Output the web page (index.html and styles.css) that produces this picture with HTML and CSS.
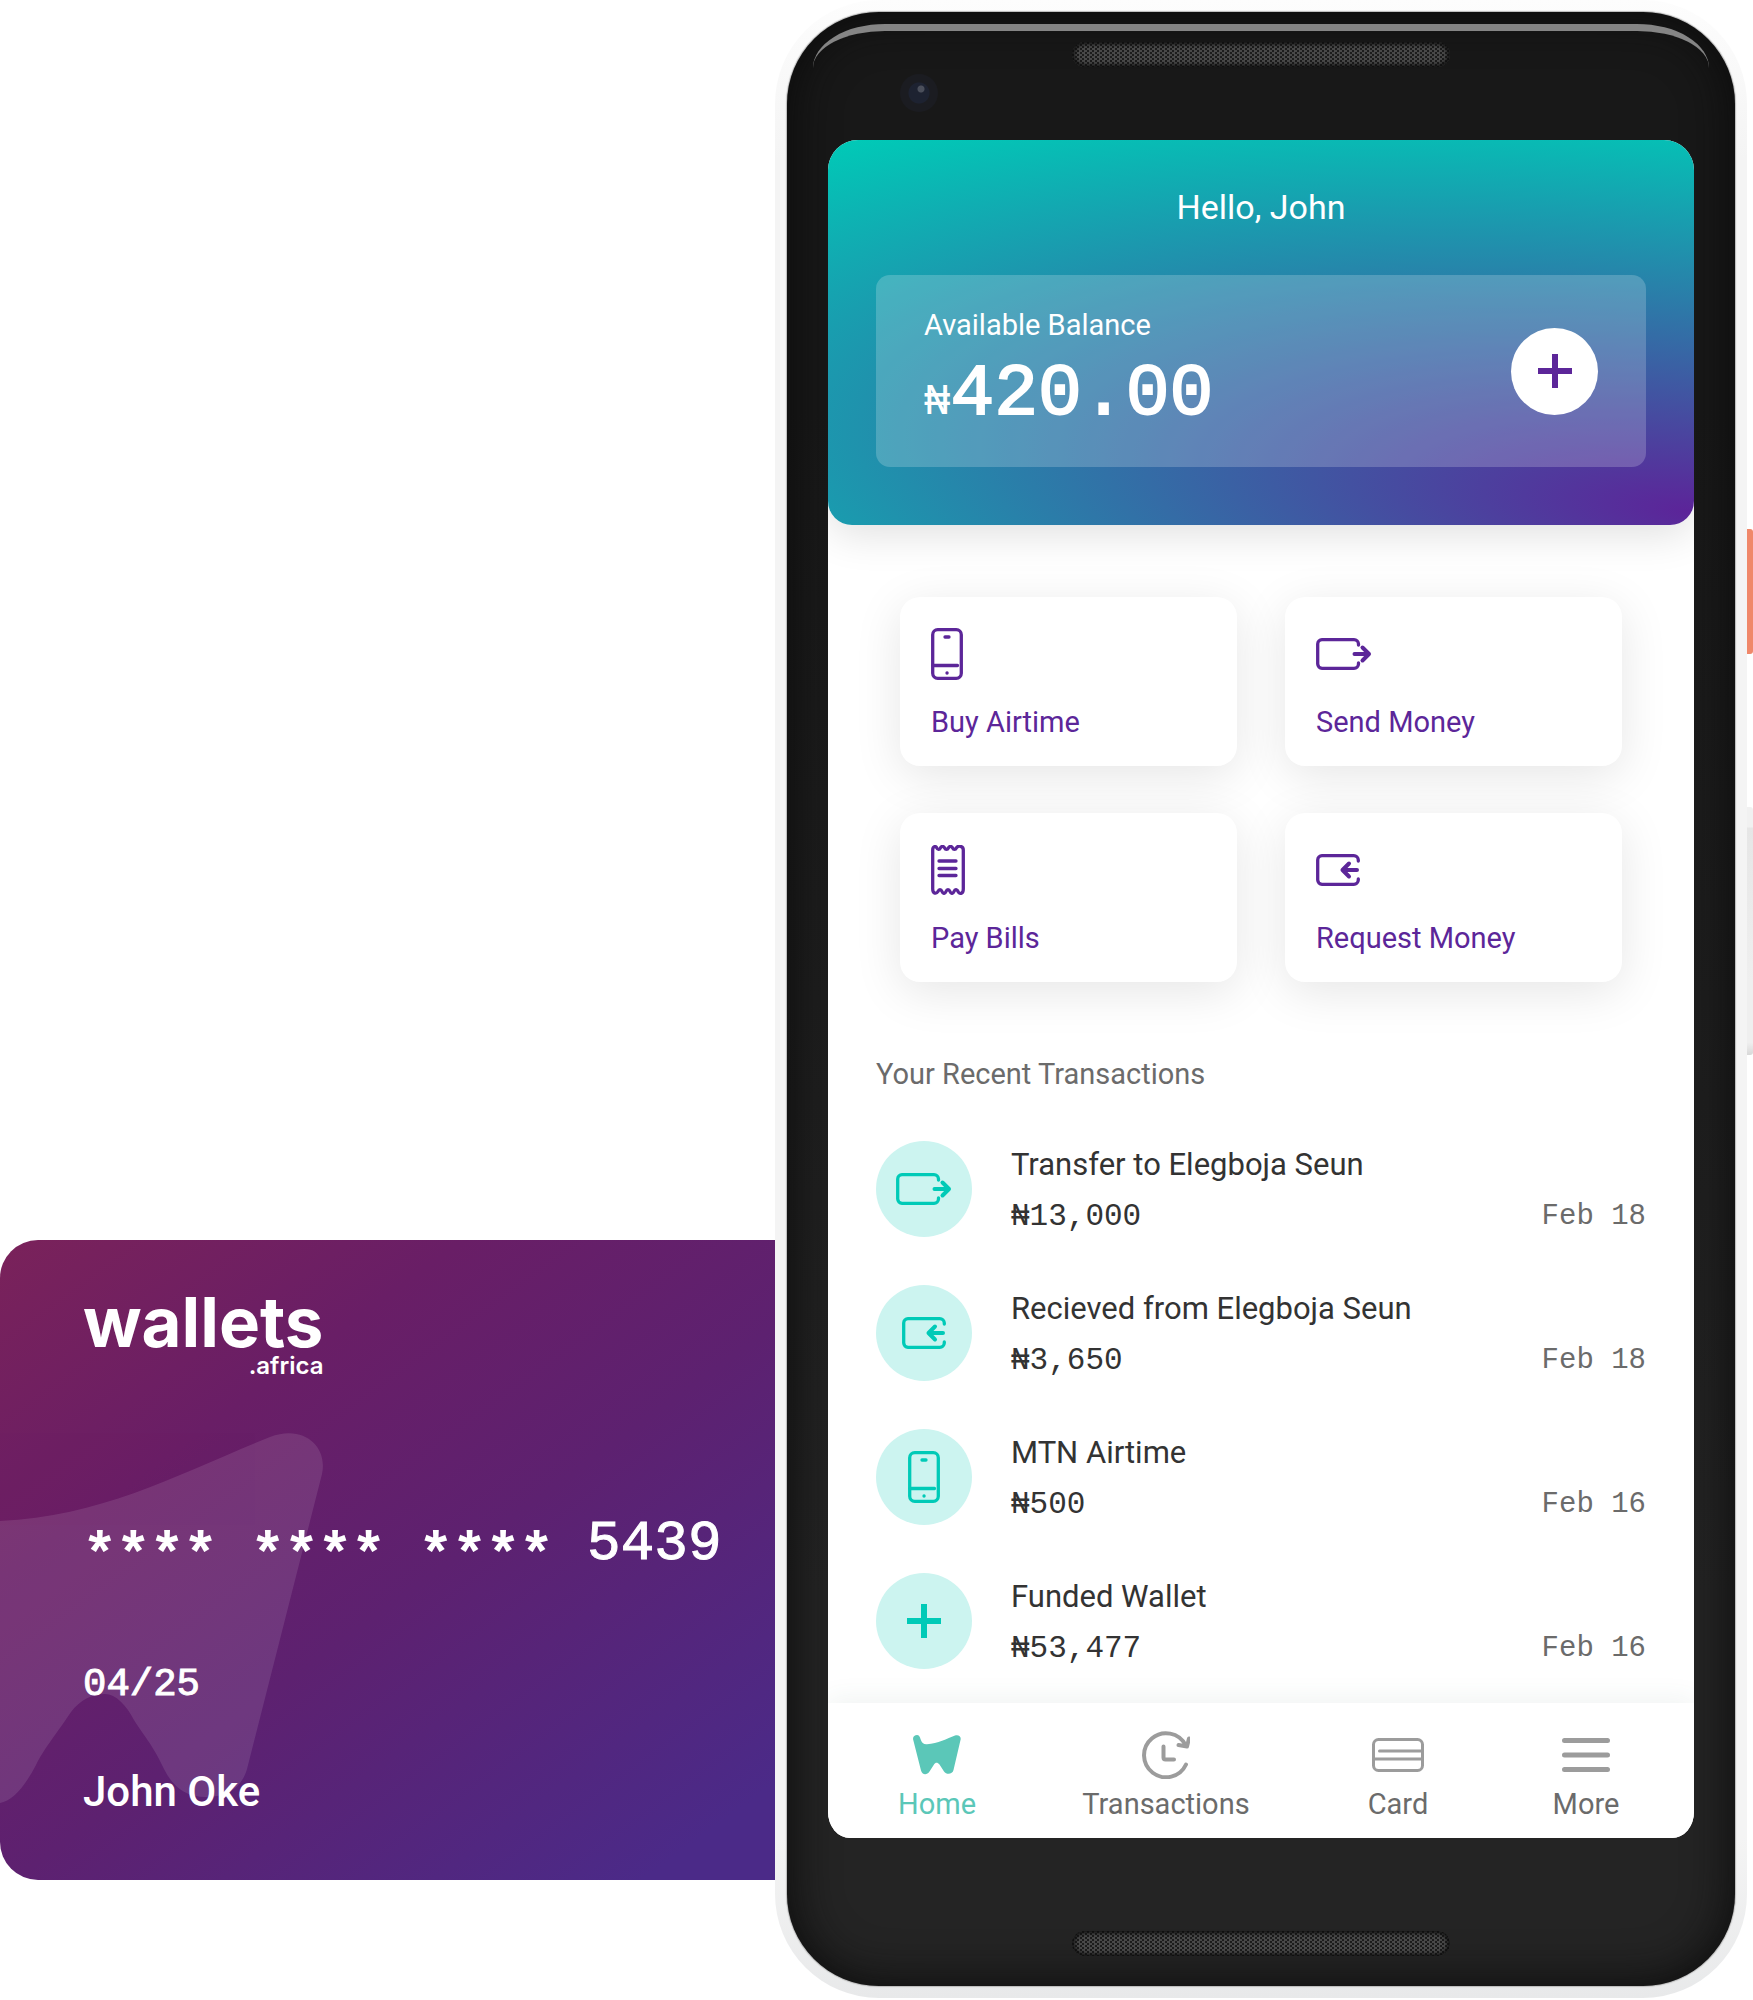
FILE: index.html
```html
<!DOCTYPE html>
<html lang="en">
<head>
<meta charset="utf-8">
<meta name="viewport" content="width=device-width, initial-scale=1">
<title>Wallets Africa</title>
<link rel="stylesheet" href="styles.css">
</head>
<body>
<svg class="sprite" aria-hidden="true">
  <symbol id="i-phone" viewBox="0 0 32 52">
    <rect x="1.700" y="1.700" width="28.600" height="48.600" rx="5"/>
    <path d="M14 9h4M2 37.500h24.500M16 45h.1"/>
  </symbol>
  <symbol id="i-send" viewBox="0 0 56 32">
    <path d="M42.500 7V6a4.500 4.500 0 0 0-4.500-4.300H6A4.500 4.500 0 0 0 1.700 6v20A4.500 4.500 0 0 0 6 30.300h32a4.500 4.500 0 0 0 4.500-4.300v-1"/>
    <path class="arrow" d="M38.500 16H53M46.500 9.500l6.500 6.500-6.500 6.500"/>
  </symbol>
  <symbol id="i-receive" viewBox="0 0 44 32">
    <path d="M42.300 7V6a4.500 4.500 0 0 0-4.500-4.300H6A4.500 4.500 0 0 0 1.700 6v20A4.500 4.500 0 0 0 6 30.300h31.800a4.500 4.500 0 0 0 4.500-4.300v-1"/>
    <path class="arrow" d="M41 16H26.500M33 9.500L26.500 16l6.500 6.500"/>
  </symbol>
  <symbol id="i-receipt" viewBox="0 0 34 50">
    <path d="M1.700 5C1.700 1 4.500 1 5.500 2.500C6.500 5 8.500 5 9.500 2.800C10.500 1 12.500 1 13.500 2.800C14.500 5 16.500 5 17.500 2.800C18.500 1 20.500 1 21.500 2.800C22.500 5 24.500 5 25.500 2.800C27.500 0 32.300 1 32.300 5V44C32.300 49 29 49 27.500 47.200C26 44 24 44 23 46.500C22 49 20 49 19 46.500C18 44 16 44 15 46.500C14 49 12 49 11 46.500C10 44 8 44 7 46.500C5.500 49 1.700 49 1.700 44Z"/>
    <path d="M8 16h17M8 23.500h17M8 30.500h17"/>
  </symbol>
  <symbol id="i-plus" viewBox="0 0 34 34">
    <path class="square" d="M17 0v34M0 17h34"/>
  </symbol>
  <symbol id="i-home" viewBox="0 0 48 40">
    <path class="solid" d="M0 4C0 1 2 0 4 0S7 2 7.500 4C8.500 8 11 9.500 14 9.200C25 8.500 34 3.500 42 .5C45.500-.8 48.500 1.500 47.500 5L40.500 35C39.500 39.500 33.500 40 31 36.500L26.500 29.500C24.500 27 22.500 27 21 29.500L16.500 36.500C14 40.500 9 40 8 35.500Z"/>
  </symbol>
  <symbol id="i-clock" viewBox="0 0 48 48">
    <path d="M44 33.500A22 22 0 1 1 43.500 14"/>
    <path d="M36.500 14l8.500 1.500 2-8M21.500 15.500v11a2 2 0 0 0 2 2H32"/>
  </symbol>
  <symbol id="i-card" viewBox="0 0 52 34">
    <rect x="1.500" y="1.500" width="49" height="31" rx="5"/>
    <path d="M7.500 13h42M2 21h48"/>
  </symbol>
  <symbol id="i-menu" viewBox="0 0 48 36">
    <path d="M2.500 3.500h43M2.500 18h43M2.500 32.500h43"/>
  </symbol>
</svg>

<div class="scene">
  <section class="bank-card" aria-label="Debit card">
    <svg class="watermark" viewBox="0 0 324 640" aria-hidden="true">
      <path d="M0 281C105 276 180 233 270 197C304 184 328 207 322 234L247 529C242 547 228 557 206 557C184 557 172 545 164 529C152 503 143 495 134 480C126 465 116 454 105 454C92 454 80 460 71 472C52 500 44 509 36 525C24 548 12 561 0 563Z"/>
    </svg>
    <div class="logo">
      <span class="logo-name">wallets</span>
      <span class="logo-domain">.africa</span>
    </div>
    <p class="card-number"><span class="mask">**** **** ****</span> 5439</p>
    <p class="card-expiry">04/25</p>
    <p class="card-holder">John Oke</p>
  </section>

  <div class="phone">
    <i class="side-button power"></i>
    <i class="side-button volume"></i>
    <div class="body">
      <i class="glare"></i>
      <div class="bezel-top">
        <i class="camera"></i>
        <i class="speaker"></i>
      </div>

      <main class="screen">
        <header class="hero">
          <svg class="hero-bg" viewBox="0 0 866 385" preserveAspectRatio="none" aria-hidden="true">
            <defs>
              <radialGradient id="hero-fill" gradientUnits="userSpaceOnUse" cx="0" cy="0" r="1" gradientTransform="translate(862 372) rotate(6) scale(1260 395)">
                <stop offset="0" stop-color="#5c2499"/>
                <stop offset="1" stop-color="#00cab7"/>
              </radialGradient>
            </defs>
            <rect width="866" height="385" fill="url(#hero-fill)"/>
          </svg>
          <h1 class="greeting">Hello, John</h1>
          <div class="balance">
            <div>
              <p class="balance-label">Available Balance</p>
              <p class="balance-amount"><span class="currency">₦</span>420.00</p>
            </div>
            <button class="add" type="button" aria-label="Add money"><svg width="34" height="34"><use href="#i-plus"/></svg></button>
          </div>
        </header>

        <div class="actions">
          <button class="action" type="button"><span class="action-icon"><svg width="32" height="52"><use href="#i-phone"/></svg></span>Buy Airtime</button>
          <button class="action" type="button"><span class="action-icon"><svg width="56" height="32"><use href="#i-send"/></svg></span>Send Money</button>
          <button class="action" type="button"><span class="action-icon"><svg width="34" height="50"><use href="#i-receipt"/></svg></span>Pay Bills</button>
          <button class="action" type="button"><span class="action-icon"><svg width="44" height="32"><use href="#i-receive"/></svg></span>Request Money</button>
        </div>

        <section class="recent">
          <h2 class="recent-title">Your Recent Transactions</h2>
          <ul class="list">
            <li class="row">
              <span class="bubble"><svg width="56" height="32"><use href="#i-send"/></svg></span>
              <div class="row-text"><p>Transfer to Elegboja Seun</p><p class="row-line"><span class="sum">₦13,000</span><time>Feb 18</time></p></div>
            </li>
            <li class="row">
              <span class="bubble"><svg width="44" height="32"><use href="#i-receive"/></svg></span>
              <div class="row-text"><p>Recieved from Elegboja Seun</p><p class="row-line"><span class="sum">₦3,650</span><time>Feb 18</time></p></div>
            </li>
            <li class="row">
              <span class="bubble"><svg width="32" height="52"><use href="#i-phone"/></svg></span>
              <div class="row-text"><p>MTN Airtime</p><p class="row-line"><span class="sum">₦500</span><time>Feb 16</time></p></div>
            </li>
            <li class="row">
              <span class="bubble"><svg width="34" height="34"><use href="#i-plus"/></svg></span>
              <div class="row-text"><p>Funded Wallet</p><p class="row-line"><span class="sum">₦53,477</span><time>Feb 16</time></p></div>
            </li>
          </ul>
        </section>

        <nav class="tabs">
          <a class="tab active" href="#home"><span class="tab-icon"><svg width="48" height="40"><use href="#i-home"/></svg></span>Home</a>
          <a class="tab" href="#transactions"><span class="tab-icon"><svg width="48" height="48"><use href="#i-clock"/></svg></span>Transactions</a>
          <a class="tab" href="#card"><span class="tab-icon thin"><svg width="52" height="34"><use href="#i-card"/></svg></span>Card</a>
          <a class="tab" href="#more"><span class="tab-icon thick"><svg width="48" height="36"><use href="#i-menu"/></svg></span>More</a>
        </nav>
      </main>

      <div class="bezel-bottom"><i class="speaker"></i></div>
    </div>
  </div>
</div>
</body>
</html>
```

FILE: styles.css
```css
* { box-sizing: border-box; }

body {
  margin: 0;
  background: #fff;
  color: #333;
  font-family: Roboto, "Liberation Sans", sans-serif;
  font-size: 29px;
  line-height: 36px;
}

h1, h2, p, ul { margin: 0; padding: 0; font-size: inherit; font-weight: 400; }
ul { list-style: none; }
button { border: 0; font: inherit; text-align: left; cursor: pointer; }
a { color: inherit; text-decoration: none; }

svg {
  display: block;
  fill: none;
  stroke: currentColor;
  stroke-width: 3.3;
  stroke-linecap: round;
  stroke-linejoin: round;
}
.sprite { position: absolute; width: 0; height: 0; }
.square { stroke-width: 6; stroke-linecap: butt; }
.solid { fill: currentColor; stroke: none; }
.arrow { stroke-width: 4; }

.scene {
  display: grid;
  grid-template-columns: minmax(0, 775fr) minmax(0, 972fr);
  align-items: end;
  padding-right: 6px;
  overflow: hidden;
}

/* Debit card */
.bank-card {
  position: relative;
  margin-bottom: 120px;
  padding: 52px 0 62px 83px;
  border-radius: 38px 0 0 38px;
  overflow: hidden;
  color: #fff;
  background: linear-gradient(144deg, #7a225a 0%, #691e66 28%, #5d2170 54%, #4b2a88 92%);
}
.watermark {
  position: absolute;
  left: 0;
  top: 0;
  width: 324px;
  height: 640px;
  fill: #fff;
  stroke: none;
  opacity: .1;
}
.logo {
  position: relative;
  display: inline-flex;
  flex-direction: column;
  align-items: flex-end;
  font-family: Inter, sans-serif;
}
.logo-name { font-size: 69px; line-height: 60px; font-weight: 700; }
.logo-domain { font-size: 24px; line-height: 28px; font-weight: 600; }
.card-number, .card-expiry {
  position: relative;
  font-family: "Liberation Mono", monospace;
  -webkit-text-stroke: 1px #fff;
}
.card-number { margin-top: 132px; font-size: 56px; line-height: 64px; white-space: nowrap; }
.mask { display: inline-block; vertical-align: -12px; line-height: 40px; -webkit-text-stroke-width: 2px; }
.card-expiry { margin-top: 87px; font-size: 39px; line-height: 44px; }
.card-holder { position: relative; margin-top: 59px; font-size: 42px; line-height: 52px; font-weight: 500; }

/* Phone shell */
.phone {
  position: relative;
  padding: 12px;
  margin-bottom: 2px;
  border-radius: 104px;
  background: linear-gradient(#fdfdfd, #f4f4f4 8%, #f4f4f4 92%, #e8e9ea);
}
.side-button { position: absolute; left: 100%; width: 6px; border-radius: 0 3px 3px 0; }
.power { top: 529px; height: 125px; background: #f0886a; }
.volume { top: 807px; height: 248px; background: linear-gradient(#f1f1f1 20px, #e6e6e6 21px, #efefef 70%, #efefef 95%, #d8d8d8); }
.body {
  position: relative;
  padding: 0 41px;
  border-radius: 92px;
  background: linear-gradient(#181818, #181818 20%, #242424 80%);
  box-shadow: inset 0 0 48px #0a0a0a, 0 0 1px 1px #bbb;
}
.glare {
  position: absolute;
  top: 12px;
  left: 26px;
  right: 26px;
  height: 44px;
  border-top: 7px solid #858585;
  border-radius: 72px 72px 0 0 / 44px 44px 0 0;
}
.bezel-top, .bezel-bottom { position: relative; display: flex; justify-content: center; }
.bezel-top { height: 128px; padding-top: 30px; }
.bezel-bottom { height: 148px; align-items: flex-end; padding-bottom: 30px; }
.speaker {
  width: 378px;
  height: 25px;
  border-radius: 13px;
  background: repeating-conic-gradient(#484848 0 25%, #1c1c1c 0 50%) 0 0 / 5px 4px;
  box-shadow: inset 0 0 4px 2px #0c0c0c;
}
.camera {
  position: absolute;
  left: 72px;
  top: 62px;
  width: 38px;
  height: 38px;
  border-radius: 50%;
  background: radial-gradient(circle at 21px 15px, #4b4f5b 3px, transparent 4px),
    radial-gradient(circle, #1d2231 10px, #1b1c21 11px);
}

/* App */
.screen {
  position: relative;
  border-radius: 30px 30px 22px 22px / 30px 30px 26px 26px;
  overflow: hidden;
  background: #fff;
}
.hero {
  position: relative;
  padding: 45px 48px 58px;
  border-radius: 0 0 24px 24px;
  color: #fff;
  box-shadow: 0 10px 40px rgba(0, 0, 0, .12);
}
.hero-bg {
  position: absolute;
  inset: 0;
  width: 100%;
  height: 100%;
  border-radius: 0 0 24px 24px;
  stroke: none;
}
.greeting { position: relative; font-size: 34px; line-height: 44px; text-align: center; }
.balance {
  position: relative;
  display: flex;
  align-items: center;
  justify-content: space-between;
  margin-top: 46px;
  padding: 32px 48px 36px;
  border-radius: 14px;
  background: rgba(255, 255, 255, .2);
}
/* The extra bottom padding is optical; the add button stays centred on the panel. */
.balance > .add { margin-bottom: -4px; }
.balance-amount {
  margin-top: 16px;
  font-family: "Liberation Mono", monospace;
  font-size: 73px;
  line-height: 72px;
  -webkit-text-stroke: 2px #fff;
}
.currency { font-size: 44px; line-height: 1px; -webkit-text-stroke-width: 0; }
.add {
  display: grid;
  place-items: center;
  width: 87px;
  height: 87px;
  border-radius: 50%;
  background: #fff;
  color: #5c2699;
}

.actions {
  display: grid;
  grid-template-columns: 1fr 1fr;
  gap: 47px 48px;
  padding: 72px 72px 0;
}
.action {
  padding: 27px 31px 26px;
  border-radius: 20px;
  background: #fff;
  color: #5c2699;
  box-shadow: 0 10px 48px rgba(0, 0, 0, .1);
}
.action-icon { display: flex; align-items: center; height: 60px; margin-bottom: 20px; }

.recent { padding: 74px 48px 34px; }
.recent-title { color: #6b6b6b; }
.list { display: grid; gap: 48px; margin-top: 49px; }
.row { display: flex; align-items: center; gap: 39px; }
.bubble {
  display: grid;
  place-items: center;
  flex: none;
  width: 96px;
  height: 96px;
  border-radius: 50%;
  background: #ccf4f0;
  color: #00cab7;
}
.row-text { display: grid; gap: 12px; flex: 1; padding-top: 3px; font-size: 31px; line-height: 40px; }
.row-line { display: flex; justify-content: space-between; font-family: "Liberation Mono", monospace; }
.row-line time { font-size: 29px; color: #6b6b6b; }

.tabs {
  position: relative;
  display: grid;
  grid-template-columns: 218fr 240fr 224fr 152fr;
  padding: 27px 32px 16px 0;
  background: #fff;
  color: #6b6b6b;
  box-shadow: 0 -4px 24px rgba(60, 100, 90, .08);
}
.tab { display: grid; justify-items: center; gap: 6px; }
.tab-icon { display: flex; align-items: center; height: 50px; color: #9c9c9c; }
.tab-icon svg { stroke-width: 4; }
.thin svg { stroke-width: 3; }
.thick svg { stroke-width: 5; }
.active, .active .tab-icon { color: #5bc7b8; }
```
